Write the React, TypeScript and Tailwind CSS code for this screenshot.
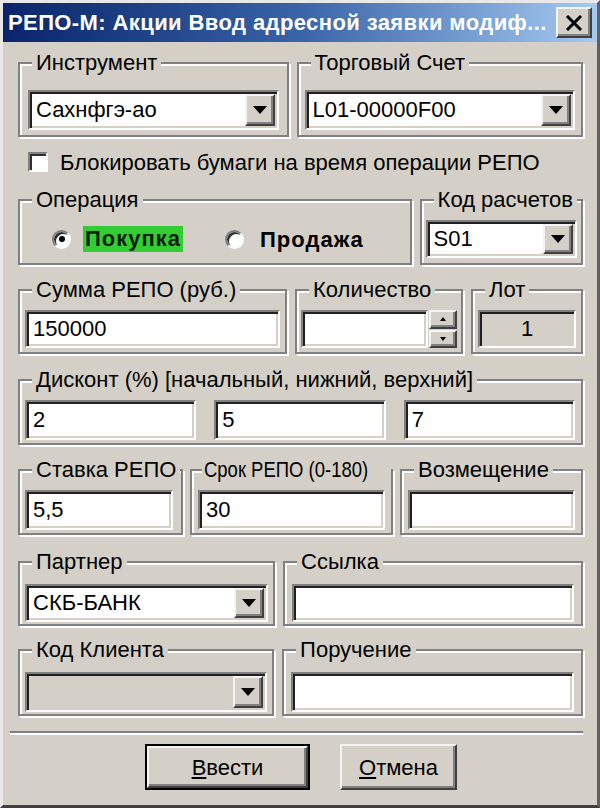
import React from "react";

const font = "font-['Liberation_Sans',Arial,sans-serif]";
const sunken =
  "border-2 border-t-[#808080] border-l-[#808080] border-b-white border-r-white shadow-[inset_2px_2px_0_#202020,inset_-2px_-2px_0_#d4d0c8]";
const raised =
  "border-2 border-t-[#f4f4f4] border-l-[#f4f4f4] border-b-[#404040] border-r-[#404040] shadow-[inset_-2px_-2px_0_#808080]";

function Group({
  label,
  className,
  inner,
  legendClass = "ml-[12px] px-[4px]",
  children,
}: {
  label: React.ReactNode;
  className: string;
  inner: string;
  legendClass?: string;
  children: React.ReactNode;
}) {
  return (
    <fieldset
      className={`border-2 border-[#808080] shadow-[inset_2px_2px_0_#fff,2px_2px_0_#fff] ${className}`}
    >
      <legend
        className={`${legendClass} text-[22px] leading-[24px] whitespace-nowrap bg-[#d4d0c8] text-black`}
      >
        {label}
      </legend>
      <div className={inner}>{children}</div>
    </fieldset>
  );
}

function Arrow() {
  return (
    <div className="w-0 h-0 border-l-[7px] border-r-[7px] border-t-[8px] border-l-transparent border-r-transparent border-t-black" />
  );
}

function Combo({
  value,
  className,
  disabled,
}: {
  value: string;
  className: string;
  disabled?: boolean;
}) {
  return (
    <div
      className={`${sunken} flex items-center ${disabled ? "bg-[#d4d0c8]" : "bg-white"} ${className}`}
    >
      <span className="flex-1 pl-[6px] text-[22px] leading-none text-black whitespace-nowrap">
        {value}
      </span>
      <div
        className={`${raised} bg-[#d4d0c8] w-[30px] h-[calc(100%-4px)] mr-[2px] flex items-center justify-center`}
      >
        <Arrow />
      </div>
    </div>
  );
}

function Field({ value, className }: { value?: string; className: string }) {
  return (
    <div className={`${sunken} bg-white flex items-center ${className}`}>
      <span className="pl-[6px] text-[22px] leading-none text-black">{value}</span>
    </div>
  );
}

function Radio({ checked }: { checked?: boolean }) {
  return (
    <div className="w-[19px] h-[19px] rounded-full bg-white border-2 border-t-[#808080] border-l-[#808080] border-b-white border-r-white shadow-[inset_2px_2px_0_#303030] flex items-center justify-center">
      {checked && <div className="w-[6px] h-[6px] rounded-full bg-black" />}
    </div>
  );
}

export default function App() {
  return (
    <div
      className={`${font} w-[600px] h-[808px] bg-[#d4d0c8] border-[3px] border-t-[#e8e8e8] border-l-[#e8e8e8] border-b-[#404040] border-r-[#606060] flex flex-col overflow-hidden`}
    >
      {/* Title bar */}
      <div className="h-[39px] shrink-0 bg-linear-to-r from-[#0a246a] via-[#3a64a8] to-[#a6caf0] flex items-center pl-[5px] pr-[5px]">
        <span className="flex-1 text-white font-bold text-[22px] tracking-[0.4px] whitespace-nowrap overflow-hidden">
          РЕПО-М: Акции Ввод адресной заявки модиф...
        </span>
        <div
          className={`${raised} bg-[#d4d0c8] w-[36px] h-[31px] flex items-center justify-center`}
        >
          <svg width="18" height="16" viewBox="0 0 18 16">
            <path d="M2 1 L16 15 M16 1 L2 15" stroke="black" strokeWidth="3" />
          </svg>
        </div>
      </div>

      <div className="pl-[15px] pr-[14px] flex flex-col">
        {/* Row 1 */}
        <div className="mt-[9px] flex gap-[8px]">
          <Group label="Инструмент" className="w-[272px]" inner="px-[8px] pt-[15px] pb-[5px]">
            <Combo value="Сахнфгэ-ао" className="h-[40px]" />
          </Group>
          <Group label="Торговый Счет" className="w-[288px]" inner="px-[6px] pt-[15px] pb-[5px]">
            <Combo value="L01-00000F00" className="h-[40px]" />
          </Group>
        </div>

        {/* Checkbox */}
        <div className="mt-[11px] h-[28px] flex items-center pl-[10px] gap-[12px]">
          <div className="w-[20px] h-[20px] bg-white border-2 border-t-[#808080] border-l-[#808080] border-b-white border-r-white shadow-[inset_2px_2px_0_#303030]" />
          <span className="text-[22px] text-black">
            Блокировать бумаги на время операции РЕПО
          </span>
        </div>

        {/* Row 2 */}
        <div className="mt-[12px] flex gap-[8px]">
          <Group label="Операция" className="w-[395px]" inner="px-[6px] pt-[8px] pb-[5px]">
            <div className="h-[38px] flex items-center pl-[26px]">
              <Radio checked />
              <span className="ml-[12px] px-[2px] bg-[#33cc33] font-bold text-[22px] tracking-[1px] leading-[26px] text-[#102010]">
                Покупка
              </span>
              <div className="ml-[42px]">
                <Radio />
              </div>
              <span className="ml-[16px] font-bold text-[22px] tracking-[1px] text-black">
                Продажа
              </span>
            </div>
          </Group>
          <Group label="Код расчетов" className="w-[164px]" inner="px-[4px] pt-[8px] pb-[5px]">
            <Combo value="S01" className="h-[38px]" />
          </Group>
        </div>

        {/* Row 3 */}
        <div className="mt-[13px] flex gap-[8px]">
          <Group label="Сумма РЕПО (руб.)" className="w-[269px]" inner="px-[5px] pt-[8px] pb-[4px]">
            <Field value="150000" className="h-[38px]" />
          </Group>
          <Group label="Количество" className="w-[168px]" inner="px-[4px] pt-[8px] pb-[4px]">
            <div className="h-[38px] flex">
              <Field className="flex-1 h-full" />
              <div className="w-[28px] flex flex-col gap-[1px] ml-[1px]">
                <div className={`${raised} bg-[#d4d0c8] flex-1 flex items-center justify-center`}>
                  <div className="w-0 h-0 border-l-[3px] border-r-[3px] border-b-[4px] border-l-transparent border-r-transparent border-b-black" />
                </div>
                <div className={`${raised} bg-[#d4d0c8] flex-1 flex items-center justify-center`}>
                  <div className="w-0 h-0 border-l-[3px] border-r-[3px] border-t-[4px] border-l-transparent border-r-transparent border-t-black" />
                </div>
              </div>
            </div>
          </Group>
          <Group label="Лот" className="w-[112px]" inner="px-[5px] pt-[8px] pb-[4px]">
            <div className={`${sunken} bg-[#d4d0c8] h-[38px] flex items-center justify-center`}>
              <span className="text-[22px] leading-none text-black">1</span>
            </div>
          </Group>
        </div>

        {/* Row 4 */}
        <div className="mt-[14px] flex">
          <Group
            label="Дисконт (%) [начальный, нижний, верхний]"
            className="w-[565px]"
            inner="px-[5px] pt-[8px] pb-[3px]"
          >
            <div className="grid grid-cols-3 gap-[18px] pr-[1px]">
              <Field value="2" className="h-[40px]" />
              <Field value="5" className="h-[40px]" />
              <Field value="7" className="h-[40px]" />
            </div>
          </Group>
        </div>

        {/* Row 5 */}
        <div className="mt-[13px] flex gap-[7px]">
          <Group label="Ставка РЕПО" className="w-[165px]" inner="px-[5px] pt-[8px] pb-[3px]">
            <Field value="5,5" className="h-[40px] mr-[3px]" />
          </Group>
          <Group
            label={
              <span className="inline-block origin-left [transform:scaleX(0.84)]">
                Срок РЕПО (0-180)
              </span>
            }
            className="w-[203px]"
            inner="px-[6px] pt-[8px] pb-[3px]"
            legendClass="ml-[10px] px-[2px] w-[189px]"
          >
            <Field value="30" className="h-[40px]" />
          </Group>
          <Group label="Возмещение" className="w-[183px]" inner="px-[6px] pt-[8px] pb-[3px]">
            <Field className="h-[40px]" />
          </Group>
        </div>

        {/* Row 6 */}
        <div className="mt-[15px] flex gap-[8px]">
          <Group label="Партнер" className="w-[257px]" inner="px-[5px] pt-[10px] pb-[2px]">
            <Combo value="СКБ-БАНК" className="h-[38px]" />
          </Group>
          <Group label="Ссылка" className="w-[300px]" inner="px-[7px] pt-[10px] pb-[2px]">
            <Field className="h-[38px]" />
          </Group>
        </div>

        {/* Row 7 */}
        <div className="mt-[12px] flex gap-[8px]">
          <Group label="Код Клиента" className="w-[257px]" inner="px-[5px] pt-[10px] pb-[2px]">
            <Combo value="" className="h-[40px]" disabled />
          </Group>
          <Group label="Поручение" className="w-[302px]" inner="px-[7px] pt-[10px] pb-[2px]">
            <Field className="h-[40px]" />
          </Group>
        </div>

        {/* Separator */}
        <div className="mt-[15px] -ml-[8px] h-[4px] border-t-2 border-t-[#808080] border-b-2 border-b-white" />

        {/* Buttons */}
        <div className="mt-[9px] flex pl-[127px] gap-[30px]">
          <div className="border-2 border-black">
            <div
              className={`${raised} bg-[#d4d0c8] w-[161px] h-[42px] flex items-center justify-center text-[22px] text-black`}
            >
              <span>
                <span className="underline underline-offset-2">В</span>вести
              </span>
            </div>
          </div>
          <div
            className={`${raised} bg-[#d4d0c8] w-[117px] h-[46px] flex items-center justify-center text-[22px] text-black`}
          >
            <span>
              <span className="underline underline-offset-2">О</span>тмена
            </span>
          </div>
        </div>
      </div>
    </div>
  );
}
